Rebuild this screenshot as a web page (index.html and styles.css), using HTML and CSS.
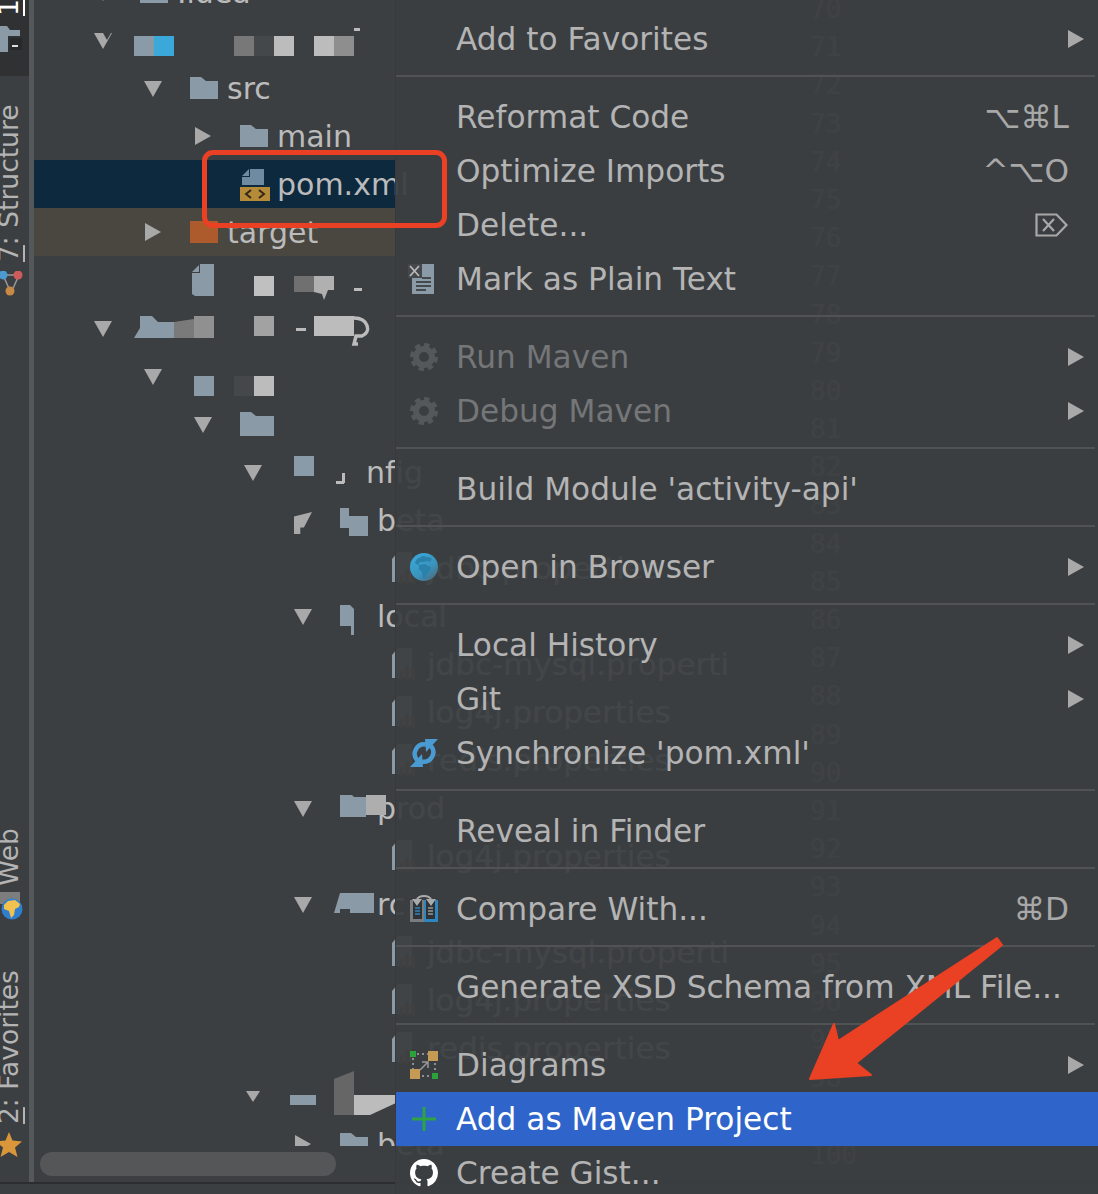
FILE: index.html
```html
<!DOCTYPE html>
<html lang="en">
<head>
<meta charset="utf-8">
<title>IDE context menu</title>
<link rel="stylesheet" href="styles.css">
</head>
<body>
<svg class="defs" aria-hidden="true">
  <defs>
    <linearGradient id="globeblue" x1="0.2" y1="0.1" x2="0.85" y2="0.95"><stop offset="0" stop-color="#39a6d6"/><stop offset="0.6" stop-color="#3a93bd"/><stop offset="1" stop-color="#4d6c7c"/></linearGradient>
  </defs>
  <symbol id="folder" viewBox="0 0 28 22"><path d="M0 0h11l5 4h12v18H0z" fill="#8a9aa6"/></symbol>
  <symbol id="propfile" viewBox="0 0 28 34"><path d="M2 8l6-7h14v30H2z" fill="#8a9aa6"/><path d="M10 33V24h3v9zM15 33V19h4v14zM21 33V22h4v11z" fill="#8d5f37"/></symbol>
  <symbol id="gear" viewBox="0 0 28 28"><circle cx="14" cy="14" r="8" fill="none" stroke="currentColor" stroke-width="6"/><circle cx="14" cy="14" r="11.5" fill="none" stroke="currentColor" stroke-width="5" stroke-dasharray="5 4"/></symbol>
</svg>

<div class="ide">
  <div class="main">
    <aside class="rail">
      <div class="rail-top">
        <div class="vlabel rail-one"><span class="ul">1</span></div>
        <svg class="rail-proj" viewBox="0 0 24 26"><path d="M0 0h7l3 4h10v6H8v16H0z" fill="#8a9aa6"/><rect x="10" y="12" width="12" height="12" fill="#26282a"/><rect x="12" y="19" width="6" height="2" fill="#ddd"/></svg>
      </div>
      <div class="vlabel vlabel-structure"><span class="ul">7</span>: Structure</div>
      <svg class="rail-icon" viewBox="0 0 24 26"><path d="M3 4h16M3 4l8 18M19 4l-8 18" stroke="#999" stroke-width="1.5" fill="none"/><circle cx="3" cy="4" r="4.5" fill="#4c9bd0"/><circle cx="18" cy="4" r="4.5" fill="#cf5b5b"/><circle cx="10" cy="20" r="4.5" fill="#c78a45"/></svg>
      <div class="vlabel vlabel-web">Web</div>
      <svg class="rail-globe" viewBox="0 0 24 28"><rect width="20" height="12" fill="#7d7d7d"/><circle cx="12" cy="17" r="10.5" fill="#2f7fd0"/><path d="M8 9l7-1 5 4-1 3-4 2-1 6-3 3-2-7-5-2 0-4z" fill="#f2c14e"/></svg>
      <div class="vlabel vlabel-fav"><span class="ul">2</span>: Favorites</div>
      <svg class="rail-star" viewBox="0 0 26 26"><path d="M9 0l3.5 8.5L22 9.500l-7 6 2.500 9.500L9 20l-8.500 5L3 15.500l-7-6 9.500-1z" fill="#d9963a"/></svg>
    </aside>

    <section class="tree">
      <div class="rows">
        <div class="row d0"><span class="arrow down"></span><svg class="ico"><use href="#folder"/></svg><span class="label">.idea</span></div>

        <div class="row d0"><span class="arrow down bite"></span>
          <svg class="mosaic mw230" viewBox="0 0 230 48"><rect y="20" width="20" height="20" fill="#8a9aa6"/><rect x="20" y="20" width="20" height="20" fill="#3aa8d8"/><rect x="100" y="20" width="20" height="20" fill="#787878"/><rect x="120" y="20" width="20" height="20" fill="#45484b"/><rect x="140" y="20" width="20" height="20" fill="#bcbcbc"/><rect x="180" y="20" width="20" height="20" fill="#bcbcbc"/><rect x="200" y="20" width="20" height="20" fill="#8e8e8e"/><rect x="220" y="12" width="6" height="3" fill="#bbb"/></svg>
        </div>

        <div class="row d1"><span class="arrow down"></span><svg class="ico"><use href="#folder"/></svg><span class="label">src</span></div>
        <div class="row d2"><span class="arrow right"></span><svg class="ico"><use href="#folder"/></svg><span class="label">main</span></div>

        <div class="row d2 selected"><span class="arrow none"></span>
          <svg class="ico xml" viewBox="0 0 30 36"><path d="M2 10l7-7v7z" fill="#6f8ba1"/><path d="M10 3h14v16H2v-8h8z" fill="#6f8ba1"/><rect y="21" width="30" height="14" fill="#b58a38"/><path d="M11 24l-5 4 5 4M19 24l5 4-5 4" fill="none" stroke="#33291a" stroke-width="2"/></svg>
          <span class="label">pom.xml</span></div>

        <div class="row d1 excluded"><span class="arrow right"></span><svg class="ico"><path d="M0 7h28v22H0z" fill="#ad5a2c"/></svg><span class="label">target</span></div>

        <div class="row d1"><span class="arrow none"></span>
          <svg class="mosaic mw180" viewBox="0 0 180 48"><path d="M2 16l7-7v7z" fill="#8a9aa6"/><path d="M10 8h14v32H5l-3-2V17h8z" fill="#8a9aa6"/><rect x="64" y="20" width="20" height="20" fill="#c0c0c0"/><rect x="104" y="20" width="20" height="16" fill="#707070"/><path d="M124 20h20v14h-6l-4 10-2-6-8-2z" fill="#b0b0b0"/><rect x="164" y="32" width="8" height="3" fill="#bbb"/></svg>
        </div>

        <div class="row d0"><span class="arrow down"></span>
          <svg class="mosaic mw240" viewBox="0 0 240 48"><path d="M0 34l6-10V12h12l6 6h16v16z" fill="#8a9aa6"/><path d="M40 18l20-3v19H40z" fill="#7a7a7a"/><rect x="60" y="12" width="20" height="22" fill="#909090"/><rect x="120" y="12" width="20" height="20" fill="#a2a2a2"/><rect x="162" y="24" width="10" height="3" fill="#bbb"/><rect x="180" y="12" width="40" height="20" fill="#bcbcbc"/><path d="M220 14c14 0 18 14 8 18h-6l-2 8h4" fill="none" stroke="#bcbcbc" stroke-width="3.500"/></svg>
        </div>

        <div class="row d1"><span class="arrow down"></span>
          <svg class="mosaic mw100" viewBox="0 0 100 48"><rect x="4" y="24" width="20" height="20" fill="#8a9aa6"/><rect x="44" y="24" width="20" height="20" fill="#45484b"/><rect x="64" y="24" width="20" height="20" fill="#bcbcbc"/></svg>
        </div>

        <div class="row d2"><span class="arrow down"></span>
          <svg class="mosaic mw40" viewBox="0 0 40 48"><path d="M0 12h11l5 4h12v20H0z" fill="#8a9aa6"/><rect x="28" y="16" width="6" height="20" fill="#8a9aa6"/></svg>
        </div>

        <div class="row d3"><span class="arrow down"></span>
          <svg class="mosaic mw76" viewBox="0 0 76 48"><rect x="4" y="8" width="20" height="20" fill="#8a9aa6"/><rect x="46" y="33" width="8" height="3" fill="#bbb"/><rect x="52" y="25" width="3" height="10" fill="#bbb"/></svg>
          <span class="label">nfig</span></div>

        <div class="row d4"><span class="arrow cut"></span>
          <svg class="mosaic mw37" viewBox="0 0 37 48"><path d="M0 12h9v8h19v20H9V32H0z" fill="#8a9aa6"/></svg><span class="label">beta</span></div>
        <div class="row d5"><span class="arrow none"></span><svg class="ico"><use href="#propfile"/></svg><span class="label ghost">jdbc.properties</span></div>
        <div class="row d4"><span class="arrow down"></span>
          <svg class="mosaic mw37" viewBox="0 0 37 48"><path d="M0 13h10l4 4v26h-3v-9H0z" fill="#8a9aa6"/></svg><span class="label">local</span></div>
        <div class="row d5"><span class="arrow none"></span><svg class="ico"><use href="#propfile"/></svg><span class="label ghost">jdbc-mysql.properti</span></div>
        <div class="row d5"><span class="arrow none"></span><svg class="ico"><use href="#propfile"/></svg><span class="label ghost">log4j.properties</span></div>
        <div class="row d5"><span class="arrow none"></span><svg class="ico"><use href="#propfile"/></svg><span class="label ghost">redis.properties</span></div>

        <div class="row d4"><span class="arrow down"></span>
          <svg class="mosaic mw37" viewBox="0 0 37 48"><path d="M0 11h12l2 2h12v20H0z" fill="#8a9aa6"/><rect x="26" y="11" width="20" height="20" fill="#aeaeae"/></svg><span class="label">prod</span></div>
        <div class="row d5"><span class="arrow none"></span><svg class="ico"><use href="#propfile"/></svg><span class="label ghost">log4j.properties</span></div>

        <div class="row d4"><span class="arrow down"></span>
          <svg class="mosaic mw37" viewBox="0 0 37 48"><path d="M-6 33l6-20h34v20H10v-4H0v4z" fill="#8a9aa6"/></svg><span class="label">rc</span></div>
        <div class="row d5"><span class="arrow none"></span><svg class="ico"><use href="#propfile"/></svg><span class="label ghost">jdbc-mysql.properti</span></div>
        <div class="row d5"><span class="arrow none"></span><svg class="ico"><use href="#propfile"/></svg><span class="label ghost">log4j.properties</span></div>
        <div class="row d5"><span class="arrow none"></span><svg class="ico"><use href="#propfile"/></svg><span class="label ghost">redis.properties</span></div>

        <div class="row d3"><span class="arrow small"></span>
          <svg class="mosaic mw106" viewBox="0 0 106 48"><rect y="23" width="26" height="10" fill="#8a9aa6"/><path d="M44 7l20-8v44H44z" fill="#666"/><path d="M64 23h42v8l-26 12H64z" fill="#bcbcbc"/></svg></div>
        <div class="row d4"><span class="arrow right"></span><svg class="ico"><use href="#folder"/></svg><span class="label">beta</span></div>
      </div>
      <div class="hscroll"><div class="thumb"></div></div>
    </section>

    <section class="editor">
      <div class="ln">70</div><div class="ln">71</div><div class="ln">72</div><div class="ln">73</div><div class="ln">74</div><div class="ln">75</div><div class="ln">76</div><div class="ln">77</div><div class="ln">78</div><div class="ln">79</div><div class="ln">80</div><div class="ln">81</div><div class="ln">82</div><div class="ln">83</div><div class="ln">84</div><div class="ln">85</div><div class="ln">86</div><div class="ln">87</div><div class="ln">88</div><div class="ln">89</div><div class="ln">90</div><div class="ln">91</div><div class="ln">92</div><div class="ln">93</div><div class="ln">94</div><div class="ln">95</div><div class="ln">96</div><div class="ln">97</div><div class="ln">98</div><div class="ln">99</div><div class="ln">100</div><div class="ln">101</div>
    </section>
  </div>
  <div class="status"></div>

  <nav class="menu">
    <div class="item"><span class="mi"></span><span>Add to Favorites</span><span class="sub"></span></div>
    <div class="sep"></div>
    <div class="item"><span class="mi"></span><span>Reformat Code</span><span class="sc">⌥⌘L</span></div>
    <div class="item"><span class="mi"></span><span>Optimize Imports</span><span class="sc">^⌥O</span></div>
    <div class="item"><span class="mi"></span><span>Delete...</span>
      <svg class="sc-icon" viewBox="0 0 34 24"><path d="M1.500 1.500h20l10 10.500-10 10.500h-20z" fill="none" stroke="#a8a8a8" stroke-width="2.200"/><path d="M8 6l11 12M19 6L8 18" stroke="#a8a8a8" stroke-width="2.200"/></svg></div>
    <div class="item"><svg class="mi mi-mark" viewBox="0 0 28 30"><rect x="4" y="0" width="22" height="30" fill="#8a9aa6"/><rect y="0" width="14" height="14" fill="#45494d"/><path d="M2 2l9 10M11 2L2 12" stroke="#b8b8b8" stroke-width="1.800"/><path d="M14 14h9M8 18h15M8 22h15M8 26h10" stroke="#45494d" stroke-width="2"/></svg><span>Mark as Plain Text</span></div>
    <div class="sep"></div>
    <div class="item off"><svg class="mi gear"><use href="#gear"/></svg><span>Run Maven</span><span class="sub"></span></div>
    <div class="item off"><svg class="mi gear"><use href="#gear"/></svg><span>Debug Maven</span><span class="sub"></span></div>
    <div class="sep"></div>
    <div class="item"><span class="mi"></span><span>Build Module 'activity-api'</span></div>
    <div class="sep"></div>
    <div class="item"><svg class="mi" viewBox="0 0 28 28"><circle cx="14" cy="14" r="14" fill="url(#globeblue)"/><path d="M7 6l6-3 4 1 5 1-2 4-3-1-3 1-4 0-2 3-3-2zM9 12l6-1 3 2 3 1-1 4-3 3-1 5-3-1-1-6-3-3z" fill="#2a81ab"/></svg><span>Open in Browser</span><span class="sub"></span></div>
    <div class="sep"></div>
    <div class="item"><span class="mi"></span><span>Local History</span><span class="sub"></span></div>
    <div class="item"><span class="mi"></span><span>Git</span><span class="sub"></span></div>
    <div class="item"><svg class="mi" viewBox="0 0 28 28"><path d="M16 5.500A9.500 9.500 0 0 0 7 21" fill="none" stroke="#4a9bd1" stroke-width="4.500"/><path d="M0 28h13L12 15z" fill="#4a9bd1"/><path d="M12 22.500A9.500 9.500 0 0 0 21 7" fill="none" stroke="#4a9bd1" stroke-width="4.500"/><path d="M28 0H15l1 13z" fill="#4a9bd1"/></svg><span>Synchronize 'pom.xml'</span></div>
    <div class="sep"></div>
    <div class="item"><span class="mi"></span><span>Reveal in Finder</span></div>
    <div class="sep"></div>
    <div class="item"><svg class="mi" viewBox="0 0 28 28"><rect y="5" width="14" height="22" fill="#7a7d80"/><rect x="14" y="5" width="14" height="22" fill="#2d86bd"/><rect x="3" y="5" width="9" height="19" fill="#2f3336"/><rect x="16" y="5" width="9" height="19" fill="#2f3336"/><path d="M5 13h5M5 16h5M5 19h5" stroke="#2d86bd" stroke-width="1.500"/><path d="M18 13h5M18 16h5M18 19h5" stroke="#999" stroke-width="1.500"/><path d="M7 5a7 4 0 0 1 14 0" fill="none" stroke="#aaa" stroke-width="2"/><path d="M2 4h10l-5 7zM16 4h10l-5 7z" fill="#aaa"/></svg><span>Compare With...</span><span class="sc">⌘D</span></div>
    <div class="sep"></div>
    <div class="item"><span class="mi"></span><span>Generate XSD Schema from XML File...</span></div>
    <div class="sep"></div>
    <div class="item"><svg class="mi" viewBox="0 0 28 28"><path d="M7 3h14M3 7v14M25 7v14M7 25h14" stroke="#aaa" stroke-width="1.500" stroke-dasharray="2 3"/><path d="M10 19l7-7M12 11h6v6" fill="none" stroke="#999" stroke-width="1.500"/><rect width="6" height="6" fill="#2aa33a"/><rect x="18" width="10" height="10" fill="#c59a55"/><rect y="18" width="10" height="10" fill="#c59a55"/><rect x="22" y="22" width="6" height="6" fill="#2aa33a"/></svg><span>Diagrams</span><span class="sub"></span></div>
    <div class="item active"><svg class="mi" viewBox="0 0 28 28"><path d="M14 2v24M2 14h24" stroke="#2da345" stroke-width="3"/></svg><span>Add as Maven Project</span></div>
    <div class="item"><svg class="mi" viewBox="0 0 16 16"><path fill="#fff" d="M8 0C3.580 0 0 3.580 0 8c0 3.540 2.290 6.530 5.470 7.590.4.070.55-.17.55-.38 0-.19-.01-.82-.01-1.490-2.010.37-2.530-.49-2.690-.94-.09-.23-.48-.94-.82-1.130-.28-.15-.68-.52-.01-.53.63-.01 1.080.58 1.230.82.720 1.210 1.870.87 2.330.66.070-.52.280-.87.510-1.070-1.780-.2-3.640-.89-3.640-3.950 0-.87.310-1.590.820-2.150-.08-.2-.36-1.020.080-2.120 0 0 .67-.21 2.200.82.640-.18 1.320-.27 2-.27.680 0 1.360.090 2 .27 1.530-1.040 2.200-.82 2.200-.82.440 1.100.160 1.920.080 2.120.510.560.820 1.270.820 2.150 0 3.070-1.870 3.750-3.650 3.950.290.250.540.730.540 1.480 0 1.070-.01 1.930-.01 2.200 0 .21.150.46.550.38A8.013 8.013 0 0 0 16 8c0-4.420-3.580-8-8-8z"/></svg><span>Create Gist...</span></div>
  </nav>

  <div class="callout-box"></div>
  <svg class="callout-arrow" viewBox="0 0 230 180"><path d="M207 18L212 25L66 143L81 155L20 159L44 104L48 121z" fill="#ea4023" stroke="#ea4023" stroke-width="2" stroke-linejoin="round"/></svg>
</div>
</body>
</html>
```
FILE: styles.css
```css
* { box-sizing: border-box; }
html, body { margin: 0; padding: 0; height: 100%; overflow: hidden; background: #3c3f41; }
body { font-family: "DejaVu Sans", sans-serif; color: #bbbbbb; }
.defs { position: absolute; width: 0; height: 0; }

.ide { position: relative; height: 1194px; display: flex; flex-direction: column; overflow: hidden; }
.main { flex: 1; min-height: 0; display: flex; }
.status { height: 12px; border-top: 2px solid #2b2d2e; background: #3c3f41; }

/* left tool rail */
.rail { width: 34px; flex: none; display: flex; flex-direction: column; overflow: hidden; border-right: 5px solid; border-image: linear-gradient(90deg, #3c3f41 20%, #2b2d2f 20%, #2b2d2f 60%, #55585a 60%) 1; }
.rail-top { height: 76px; flex: none; background: #2f3133; display: flex; flex-direction: column; overflow: hidden; }
.vlabel { writing-mode: vertical-rl; transform: rotate(180deg); font-size: 26.500px; line-height: 26px; width: 26px; margin-left: -4px; white-space: nowrap; flex: none; color: #b4b4b4; }
.rail-one { height: 16px; color: #ffffff; }
.ul { text-decoration: underline; text-underline-offset: 1px; }
.rail-proj { width: 24px; height: 26px; margin-top: 10px; flex: none; }
.vlabel-structure { margin-top: 29px; height: 157px; }
.rail-icon { width: 24px; height: 26px; flex: none; margin-top: 9px; }
.vlabel-web { margin-top: 531px; height: 58px; }
.rail-globe { width: 24px; height: 28px; flex: none; margin-top: 6px; }
.vlabel-fav { margin-top: 50px; height: 154px; }
.rail-star { width: 26px; height: 26px; flex: none; margin-top: 8px; }

/* project tree */
.tree { width: 362px; flex: none; display: flex; flex-direction: column; min-height: 0; }
.rows { flex: 1; min-height: 0; margin-top: -32px; }
.row { height: 48px; display: flex; align-items: center; font-size: 30px; white-space: nowrap; }
.d0 { padding-left: 60px; }
.d1 { padding-left: 110px; }
.d2 { padding-left: 160px; }
.d3 { padding-left: 210px; }
.d4 { padding-left: 260px; }
.d5 { padding-left: 310px; }
.d0 .mosaic { margin-left: -6px; }
.selected { background: #0d293e; }
.excluded { background: #4a4741; }
.arrow { width: 18px; height: 18px; margin-right: 28px; flex: none; display: block; position: relative; }
.arrow::before { content: ""; position: absolute; width: 0; height: 0; }
.arrow.down::before { left: 0; top: 2px; border-left: 9px solid transparent; border-right: 9px solid transparent; border-top: 16px solid #a9a9a9; }
.arrow.bite::after { content: ""; position: absolute; left: 9px; top: 2px; width: 0; height: 0; border-left: 4px solid transparent; border-right: 4px solid transparent; border-top: 7px solid #3c3f41; }
.arrow.right::before { left: 1px; top: 0; border-top: 9px solid transparent; border-bottom: 9px solid transparent; border-left: 16px solid #a9a9a9; }
.arrow.small::before { left: 2px; top: 4px; border-left: 7px solid transparent; border-right: 7px solid transparent; border-top: 11px solid #a9a9a9; }
.arrow.cut::before { left: 0; top: 1px; width: 18px; height: 22px; background: #a9a9a9; clip-path: polygon(0 20%, 100% 0, 55% 70%, 35% 70%, 35% 100%, 0 100%); }
.ico { width: 28px; height: 36px; flex: none; margin-right: 9px; overflow: visible; }
.xml { width: 30px; margin-right: 7px; }
.label { flex: none; }
.ghost { font-size: 31px; }
.mosaic { height: 48px; flex: none; overflow: visible; position: relative; z-index: 1; }
.mw230 { width: 230px; } .mw180 { width: 180px; } .mw240 { width: 240px; }
.mw100 { width: 100px; } .mw40 { width: 40px; } .mw76 { width: 76px; }
.mw37 { width: 37px; } .mw106 { width: 106px; }
.hscroll { height: 36px; flex: none; position: relative; z-index: 1; background: #3c3f41; padding: 6px 60px 6px 6px; }
.thumb { height: 24px; border-radius: 12px; background: #555658; }

/* editor gutter, seen through the translucent menu */
.editor { flex: 1; padding: 0 0 0 414px; margin-top: -6px; overflow: hidden; }
.ln { height: 38.2px; line-height: 30px; font-family: "DejaVu Sans Mono", monospace; font-size: 26px; color: #7c7c7c; }

/* context menu */
.menu { position: absolute; top: 0; left: 395px; right: 0; bottom: 0; z-index: 2; padding-top: 12px; background: rgba(60, 63, 65, .94); border-left: 1px solid #37393b; overflow: hidden; font-size: 31.200px; }
.item { height: 54px; display: flex; align-items: center; padding-left: 14px; color: #b4b4b4; white-space: nowrap; }
.mi { width: 28px; height: 28px; flex: none; margin-right: 18px; display: block; }
.mi-mark { height: 30px; margin-left: -2px; margin-right: 20px; }
.sep { height: 24px; position: relative; }
.sep::after { content: ""; position: absolute; left: 0; right: 3px; top: 9px; height: 2px; background: #505254; }
.sub { margin-left: auto; margin-right: 14px; width: 0; height: 0; border-top: 9px solid transparent; border-bottom: 9px solid transparent; border-left: 16px solid #a9a9a9; }
.sc { margin-left: auto; margin-right: 29px; color: #a8a8a8; }
.sc-icon { margin-left: auto; margin-right: 29px; width: 34px; height: 24px; flex: none; }
.off { color: #747678; }
.gear { color: #55585a; }
.active { background: #2f65ca; color: #ffffff; }

/* red annotations drawn over the screenshot */
.callout-box { position: absolute; left: 202px; top: 150px; width: 245px; height: 78px; border: 5px solid #ea4023; border-radius: 11px; z-index: 3; }
.callout-arrow { position: absolute; left: 790px; top: 920px; width: 230px; height: 180px; z-index: 3; }
```
